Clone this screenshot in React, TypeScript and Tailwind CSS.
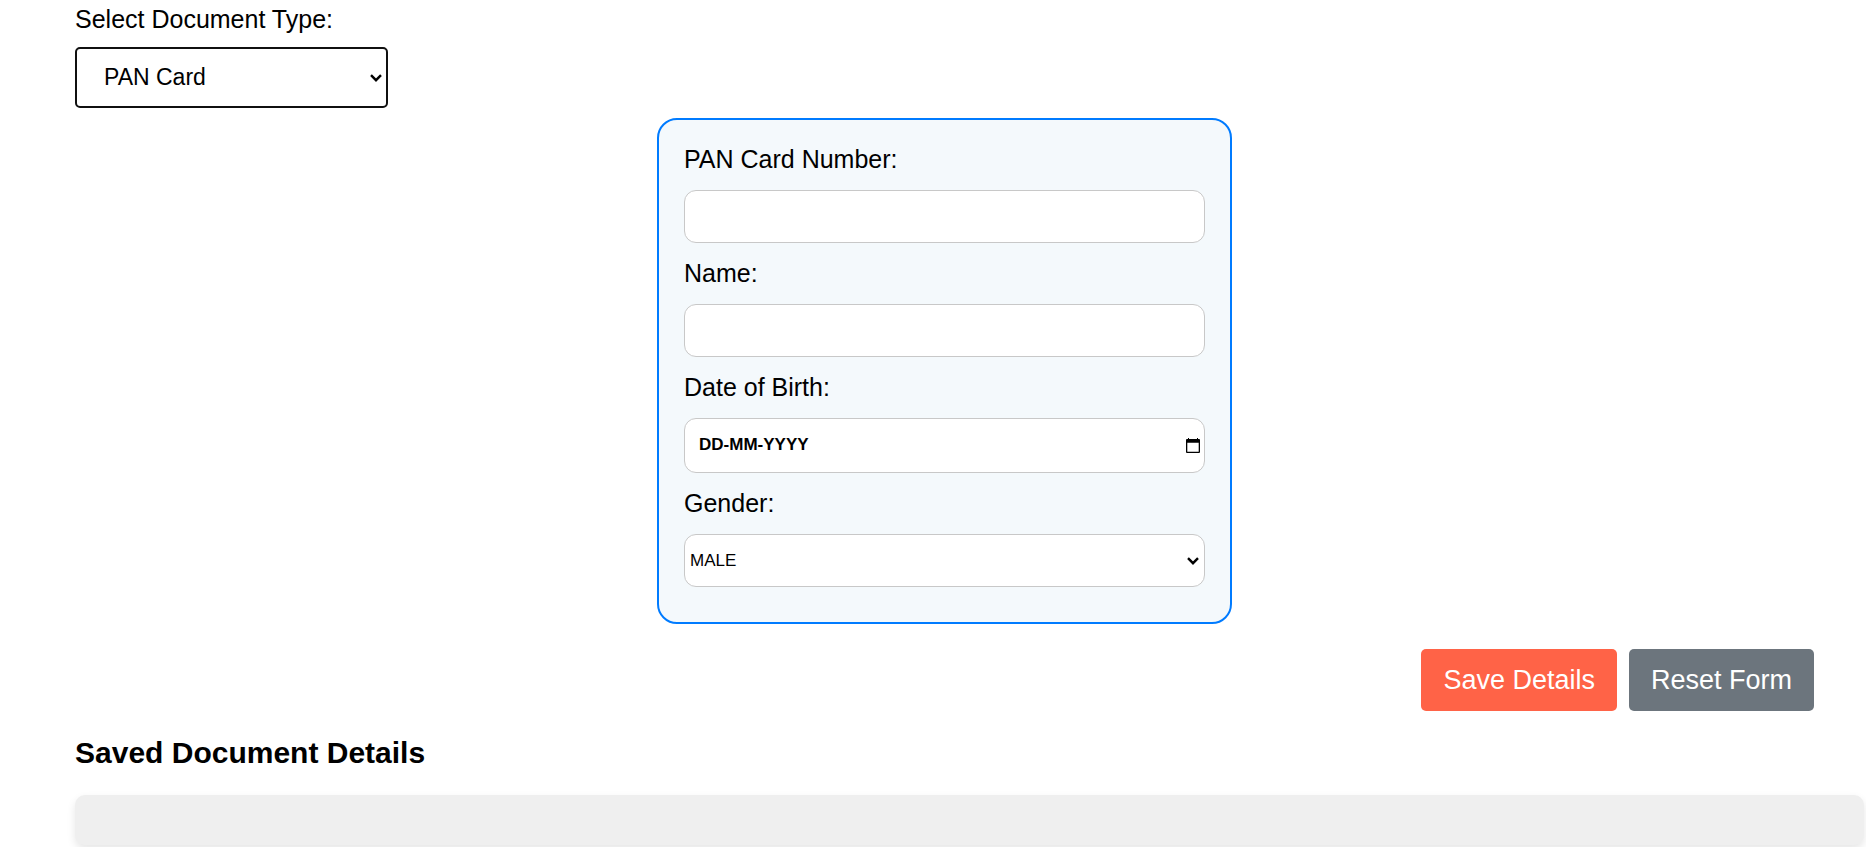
import { useState } from "react";
import type { ComponentProps, FormEvent, ReactNode } from "react";

const fieldClass =
  "block w-full rounded-xl border border-[#c8c8c8] bg-white text-[17px] text-black";

function Field({ id, label, children }: { id: string; label: string; children: ReactNode }) {
  return (
    <div>
      <label htmlFor={id} className="mb-[17px] block text-[25px] leading-7">
        {label}
      </label>
      {children}
    </div>
  );
}

function Select({ className, ...props }: ComponentProps<"select">) {
  return (
    <div className="relative">
      <select {...props} className={`appearance-none ${className}`} />
      <svg
        viewBox="0 0 12 8"
        className="pointer-events-none absolute top-1/2 right-1.5 h-2 w-3 -translate-y-1/2"
        aria-hidden="true"
      >
        <path d="M1 1.200 6 6.200 11 1.200" fill="none" stroke="#000" strokeWidth="2.4" />
      </svg>
    </div>
  );
}

function CalendarIcon() {
  return (
    <svg viewBox="0 0 14 15" className="h-[15px] w-[14px]" aria-hidden="true">
      <path
        fillRule="evenodd"
        fill="#000"
        d="M2 0h1v1h8V0h1v1h1q1 0 1 1v12q0 1-1 1H1q-1 0-1-1V2q0-1 1-1h1ZM1.300 4.700v9h11.400v-9Z"
      />
    </svg>
  );
}

export default function App() {
  const [docType, setDocType] = useState("PAN Card");
  const [birthDate, setBirthDate] = useState("DD-MM-YYYY");

  const handleSubmit = (event: FormEvent) => event.preventDefault();

  return (
    <main className="bg-white pt-[5px] pr-0.5 pb-[3px] pl-[75px] font-['Liberation_Sans',Arial,sans-serif] text-black">
      <form
        onSubmit={handleSubmit}
        onReset={() => setBirthDate("DD-MM-YYYY")}
        className="pr-[50px]"
      >
        <label htmlFor="docType" className="mb-3.5 block text-[25px] leading-7">
          Select Document Type:
        </label>
        <div className="w-[313px]">
          <Select
            id="docType"
            value={docType}
            onChange={(event) => setDocType(event.target.value)}
            className="block h-[61px] w-full rounded-[5px] border-2 border-[#101010] bg-white pl-[27px] text-[23px]"
          >
            <option>PAN Card</option>
            <option>Aadhaar Card</option>
            <option>Passport</option>
          </Select>
        </div>

        <section className="mx-auto mt-2.5 flex w-full max-w-[575px] flex-col gap-4 rounded-[20px] border-2 border-[#007bff] bg-[#f4f9fc] px-[25px] pt-[25px] pb-[35px]">
          <Field id="panNumber" label="PAN Card Number:">
            <input id="panNumber" type="text" className={`${fieldClass} h-[53px] px-3`} />
          </Field>
          <Field id="fullName" label="Name:">
            <input id="fullName" type="text" className={`${fieldClass} h-[53px] px-3`} />
          </Field>
          <Field id="birthDate" label="Date of Birth:">
            <div className={`${fieldClass} flex h-[55px] items-center pr-1 pl-3.5`}>
              <input
                id="birthDate"
                type="text"
                value={birthDate}
                onChange={(event) => setBirthDate(event.target.value)}
                className="min-w-0 grow bg-transparent pb-0.5 font-bold outline-none"
              />
              <button type="button" aria-label="Open calendar">
                <CalendarIcon />
              </button>
            </div>
          </Field>
          <Field id="gender" label="Gender:">
            <Select id="gender" className={`${fieldClass} h-[53px] pl-[5px]`}>
              <option>MALE</option>
              <option>FEMALE</option>
              <option>OTHER</option>
            </Select>
          </Field>
        </section>

        <div className="mt-[25px] flex justify-end gap-3">
          <button
            type="submit"
            className="h-[62px] rounded-[5px] bg-[#ff6347] px-[22px] text-[27px] text-white"
          >
            Save Details
          </button>
          <button
            type="reset"
            className="h-[62px] rounded-[5px] bg-[#6c757d] px-[22px] text-[27px] text-white"
          >
            Reset Form
          </button>
        </div>
      </form>

      <h2 className="mt-6 text-[30px] leading-9 font-bold">Saved Document Details</h2>
      <div className="mt-6 h-[50px] rounded-[10px] bg-[#efefef] shadow-[0_4px_8px_rgba(0,0,0,0.1)]" />
    </main>
  );
}
